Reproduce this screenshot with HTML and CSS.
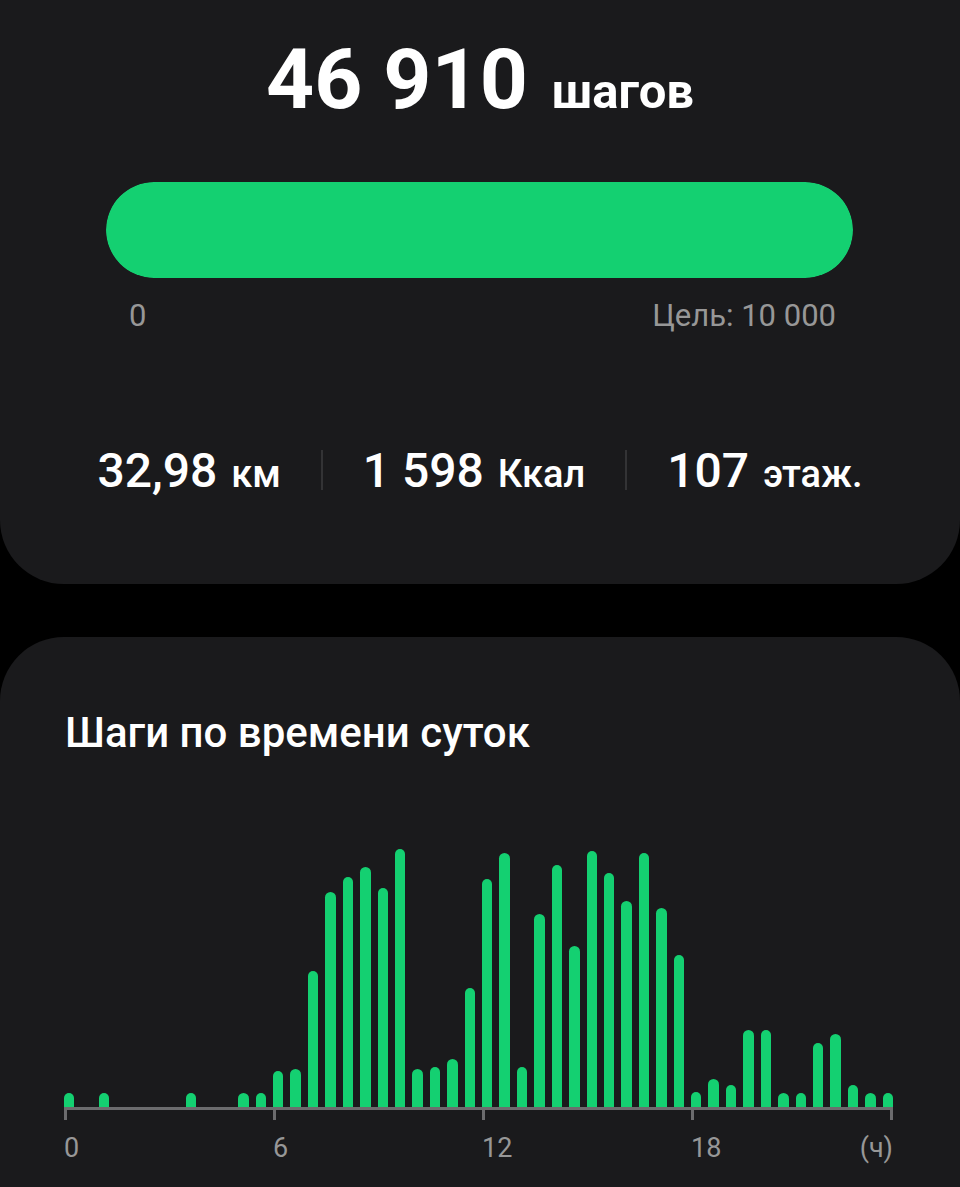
FILE: index.html
```html
<!DOCTYPE html>
<html lang="ru">
<head>
  <meta charset="UTF-8" />
  <meta name="viewport" content="width=device-width, initial-scale=1" />
  <title>Шаги</title>
  <link rel="stylesheet" href="styles.css">
</head>
<body>
  <div class="tarjeta tarjeta-resumen">
    <div class="pasos">
      <span class="pasos-numero">46 910</span>
      <span class="pasos-unidad">шагов</span>
    </div>

    <div class="barra-meta">
      <div class="barra-relleno"></div>
    </div>
    <div class="meta-etiquetas">
      <span>0</span>
      <span>Цель: 10 000</span>
    </div>

    <div class="datos">
      <div class="dato"><span class="dato-valor">32,98</span> <span class="dato-unidad">км</span></div>
      <div class="separador"></div>
      <div class="dato"><span class="dato-valor">1 598</span> <span class="dato-unidad">Ккал</span></div>
      <div class="separador"></div>
      <div class="dato"><span class="dato-valor">107</span> <span class="dato-unidad">этаж.</span></div>
    </div>
  </div>

  <div class="tarjeta tarjeta-grafica">
    <h2>Шаги по времени суток</h2>

    <div class="grafica">
      <div class="barras" id="barras"></div>
      <div class="eje">
        <div class="tramo"><span>0</span></div>
        <div class="tramo"><span>6</span></div>
        <div class="tramo"><span>12</span></div>
        <div class="tramo tramo-final"><span>18</span><span class="unidad-eje">(ч)</span></div>
      </div>
    </div>
  </div>

  <script>
    // Altura de cada barra (px), una por cada media hora
    const alturas = [
      14, 0, 14, 0, 0, 0, 0, 14, 0, 0, 14, 14,
      36, 38, 136, 215, 230, 240, 219, 258, 38, 40, 48, 119,
      228, 254, 40, 193, 242, 161, 256, 234, 206, 254, 199, 152,
      15, 28, 22, 77, 77, 14, 14, 64, 73, 22, 14, 14
    ];

    function pintarBarras() {
      const contenedor = document.getElementById('barras');
      alturas.forEach(h => {
        const barra = document.createElement('div');
        barra.className = 'barra';
        if (h > 0) barra.style.height = h + 'px';
        else barra.classList.add('vacia');
        contenedor.appendChild(barra);
      });
    }

    document.addEventListener('DOMContentLoaded', pintarBarras);
  </script>
</body>
</html>
```

FILE: styles.css
```css
body {
  margin: 0;
  background-color: #000;
  font-family: Roboto, 'Noto Sans', sans-serif;
  color: #fff;
}

.tarjeta {
  background: #1a1a1c;
}

.tarjeta-resumen {
  border-radius: 0 0 64px 64px;
  padding: 37px 0 84px;
}

.pasos {
  text-align: center;
  line-height: 86px;
  height: 86px;
}

.pasos-numero {
  font-size: 84px;
  font-weight: 700;
}

.pasos-unidad {
  font-size: 49px;
  font-weight: 700;
  margin-left: 20px;
}

.barra-meta {
  margin: 59px 107px 0 106px;
  height: 96px;
  border-radius: 48px;
  background: #2a2a2c;
  overflow: hidden;
}

.barra-relleno {
  height: 100%;
  width: 100%;
  background: #14d071;
  border-radius: 48px;
}

.meta-etiquetas {
  display: flex;
  justify-content: space-between;
  margin: 20px 124px 0 129px;
  font-size: 31px;
  line-height: 36px;
  color: #979797;
}

.datos {
  display: flex;
  justify-content: center;
  align-items: center;
  gap: 40px;
  margin-top: 106px;
  height: 60px;
}

.dato {
  white-space: nowrap;
}

.dato-valor {
  font-size: 48px;
  font-weight: 500;
}

.dato-unidad {
  font-size: 38px;
  font-weight: 500;
  margin-left: 10px;
}

.separador {
  width: 2px;
  height: 40px;
  background: #333335;
}

.tarjeta-grafica {
  margin-top: 53px;
  border-radius: 64px 64px 0 0;
  padding: 72px 0 40px;
}

h2 {
  margin: 0 0 0 65px;
  font-size: 42px;
  font-weight: 500;
  line-height: 48px;
}

.grafica {
  margin: 88px 67px 0 64px;
}

.barras {
  display: grid;
  grid-template-columns: repeat(48, 1fr);
  column-gap: 7px;
  align-items: end;
  height: 262px;
}

.barra {
  background: #14d071;
  border-radius: 6px 6px 0 0;
}

.barra.vacia {
  visibility: hidden;
}

.eje {
  display: grid;
  grid-template-columns: 12fr 12fr 12fr 11.6fr;
  border-top: 3px solid #6c6c6e;
  font-size: 27px;
  color: #979797;
}

.tramo {
  position: relative;
  display: flex;
  justify-content: space-between;
  padding-top: 22px;
  line-height: 32px;
}

.tramo::before {
  content: "";
  position: absolute;
  left: 0;
  top: 0;
  width: 3px;
  height: 10px;
  background: #6c6c6e;
}

.tramo-final::after {
  content: "";
  position: absolute;
  right: 0;
  top: 0;
  width: 3px;
  height: 10px;
  background: #6c6c6e;
}
```
